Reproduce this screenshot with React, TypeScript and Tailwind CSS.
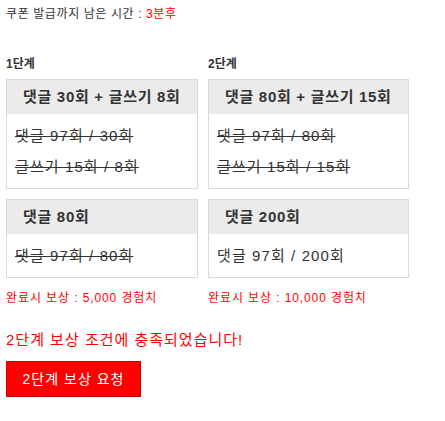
const font = { fontFamily: '"Liberation Sans", "Noto Sans CJK KR", sans-serif' };

type Goal = { title: string; lines: { text: string; done: boolean }[] };

function GoalBox({ goal }: { goal: Goal }) {
  return (
    <div className="border border-[#d9d9d9] bg-white">
      <div className="h-[34px] bg-[#ebebeb] pl-4 text-[15px] font-bold leading-[34px] tracking-[0.7px] text-[#333]">
        {goal.title}
      </div>
      <div className="pl-2 pt-[6px] pb-[6px] text-[15px] leading-[31px] tracking-[1.1px] text-[#333]">
        {goal.lines.map((l) => (
          <div key={l.text} className={l.done ? "line-through" : ""}>
            {l.text}
          </div>
        ))}
      </div>
    </div>
  );
}

const stages = [
  {
    label: "1단계",
    width: "w-[192px]",
    reward: "완료시 보상 : 5,000 경험치",
    goals: [
      {
        title: "댓글 30회 + 글쓰기 8회",
        lines: [
          { text: "댓글 97회 / 30회", done: true },
          { text: "글쓰기 15회 / 8회", done: true },
        ],
      },
      {
        title: "댓글 80회",
        lines: [{ text: "댓글 97회 / 80회", done: true }],
      },
    ],
  },
  {
    label: "2단계",
    width: "w-[201px]",
    reward: "완료시 보상 : 10,000 경험치",
    goals: [
      {
        title: "댓글 80회 + 글쓰기 15회",
        lines: [
          { text: "댓글 97회 / 80회", done: true },
          { text: "글쓰기 15회 / 15회", done: true },
        ],
      },
      {
        title: "댓글 200회",
        lines: [{ text: "댓글 97회 / 200회", done: false }],
      },
    ],
  },
];

export default function App() {
  return (
    <div className="min-h-screen bg-white px-[6px] pt-[7px]" style={font}>
      <div className="text-[12px] leading-[14px] tracking-[0.6px] text-[#333]">
        쿠폰 발급까지 남은 시간 : <span className="text-[#ff0000]">3분후</span>
      </div>

      <div className="mt-[36px] flex gap-[10px]">
        {stages.map((s) => (
          <div key={s.label} className={s.width}>
            <div className="mb-[8px] text-[12px] font-bold leading-[14px] text-[#333]">
              {s.label}
            </div>
            <div className="flex flex-col gap-[10px]">
              {s.goals.map((g) => (
                <GoalBox key={g.title} goal={g} />
              ))}
            </div>
            <div className="mt-[13px] text-[12px] leading-[14px] tracking-[0.9px] text-[#ff0000]">
              {s.reward}
            </div>
          </div>
        ))}
      </div>

      <div className="mt-[26px] text-[15px] leading-[18px] tracking-[1px] text-[#ff0000]">
        2단계 보상 조건에 충족되었습니다!
      </div>

      <button
        className="mt-[12px] h-[36px] w-[135px] border border-[#cc0000] bg-[#ff0000] text-[14px] tracking-[1px] text-white"
        style={font}
      >
        2단계 보상 요청
      </button>
    </div>
  );
}
